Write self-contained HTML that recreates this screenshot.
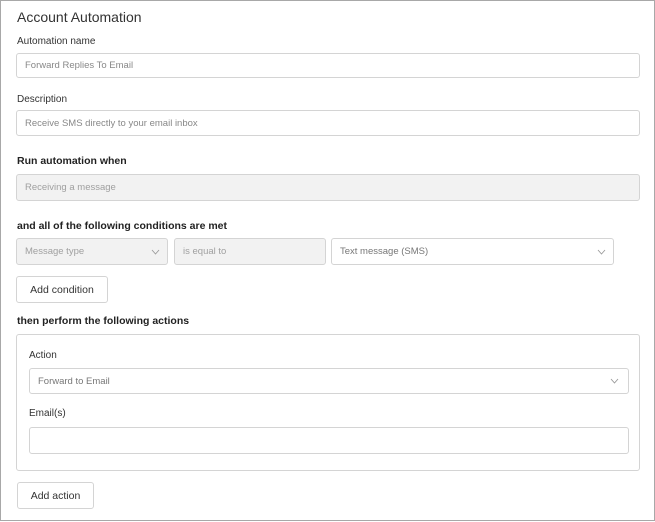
<!DOCTYPE html>
<html><head><style>
*{box-sizing:border-box;margin:0;padding:0}
body{width:655px;height:522px;background:#fff;font-family:"Liberation Sans",sans-serif;color:#222;position:relative;overflow:hidden}
.frame{position:absolute;left:0;top:0;width:655px;height:521px;border:1px solid #a8a8a8}
.a{position:absolute;white-space:nowrap}
.t{font-size:14px;color:#333}
.l{font-size:10px;color:#333}
.b{font-size:10.5px;font-weight:bold;color:#222}
.i{position:absolute;border:1px solid #d4d4d4;border-radius:3px;background:#fff;font-size:9.5px;color:#888;padding-left:8px;display:flex;align-items:center}
.g{background:#f2f2f2;color:#a0a0a0}
.btn{position:absolute;border:1px solid #d4d4d4;border-radius:3px;background:#fff;font-size:10.5px;color:#333;display:flex;align-items:center;justify-content:center}
.ch{position:absolute;right:7px;top:50%;margin-top:-3px;width:9px;height:6px}
.box{position:absolute;border:1px solid #d4d4d4;border-radius:3px}
</style></head><body>
<div class="frame"></div>
<div class="a t" style="left:17px;top:9px">Account Automation</div>
<div class="a l" style="left:17px;top:36px">Automation name</div>
<div class="i" style="left:16px;top:53px;width:624px;height:25px">Forward Replies To Email</div>
<div class="a l" style="left:17px;top:94px">Description</div>
<div class="i" style="left:16px;top:110px;width:624px;height:26px">Receive SMS directly to your email inbox</div>
<div class="a b" style="left:17px;top:155px">Run automation when</div>
<div class="i g" style="left:16px;top:174px;width:624px;height:27px">Receiving a message</div>
<div class="a b" style="left:17px;top:220px">and all of the following conditions are met</div>
<div class="i g" style="left:16px;top:238px;width:152px;height:27px">Message type<svg class="ch" viewBox="0 0 9 6"><path d="M1 1L4.5 5L8 1" fill="none" stroke="#999" stroke-width="0.9"/></svg></div>
<div class="i g" style="left:174px;top:238px;width:152px;height:27px">is equal to</div>
<div class="i" style="left:331px;top:238px;width:283px;height:27px;color:#777">Text message (SMS)<svg class="ch" viewBox="0 0 9 6"><path d="M1 1L4.5 5L8 1" fill="none" stroke="#999" stroke-width="0.9"/></svg></div>
<div class="btn" style="left:16px;top:276px;width:92px;height:27px">Add condition</div>
<div class="a b" style="left:17px;top:315px">then perform the following actions</div>
<div class="box" style="left:16px;top:334px;width:624px;height:137px"></div>
<div class="a l" style="left:29px;top:350px">Action</div>
<div class="i" style="left:29px;top:368px;width:600px;height:26px;color:#777">Forward to Email<svg class="ch" viewBox="0 0 9 6" style="right:9px"><path d="M1 1L4.5 5L8 1" fill="none" stroke="#999" stroke-width="0.9"/></svg></div>
<div class="a l" style="left:29px;top:408px">Email(s)</div>
<div class="i" style="left:29px;top:427px;width:600px;height:27px"></div>
<div class="btn" style="left:17px;top:482px;width:77px;height:27px">Add action</div>
</body></html>
